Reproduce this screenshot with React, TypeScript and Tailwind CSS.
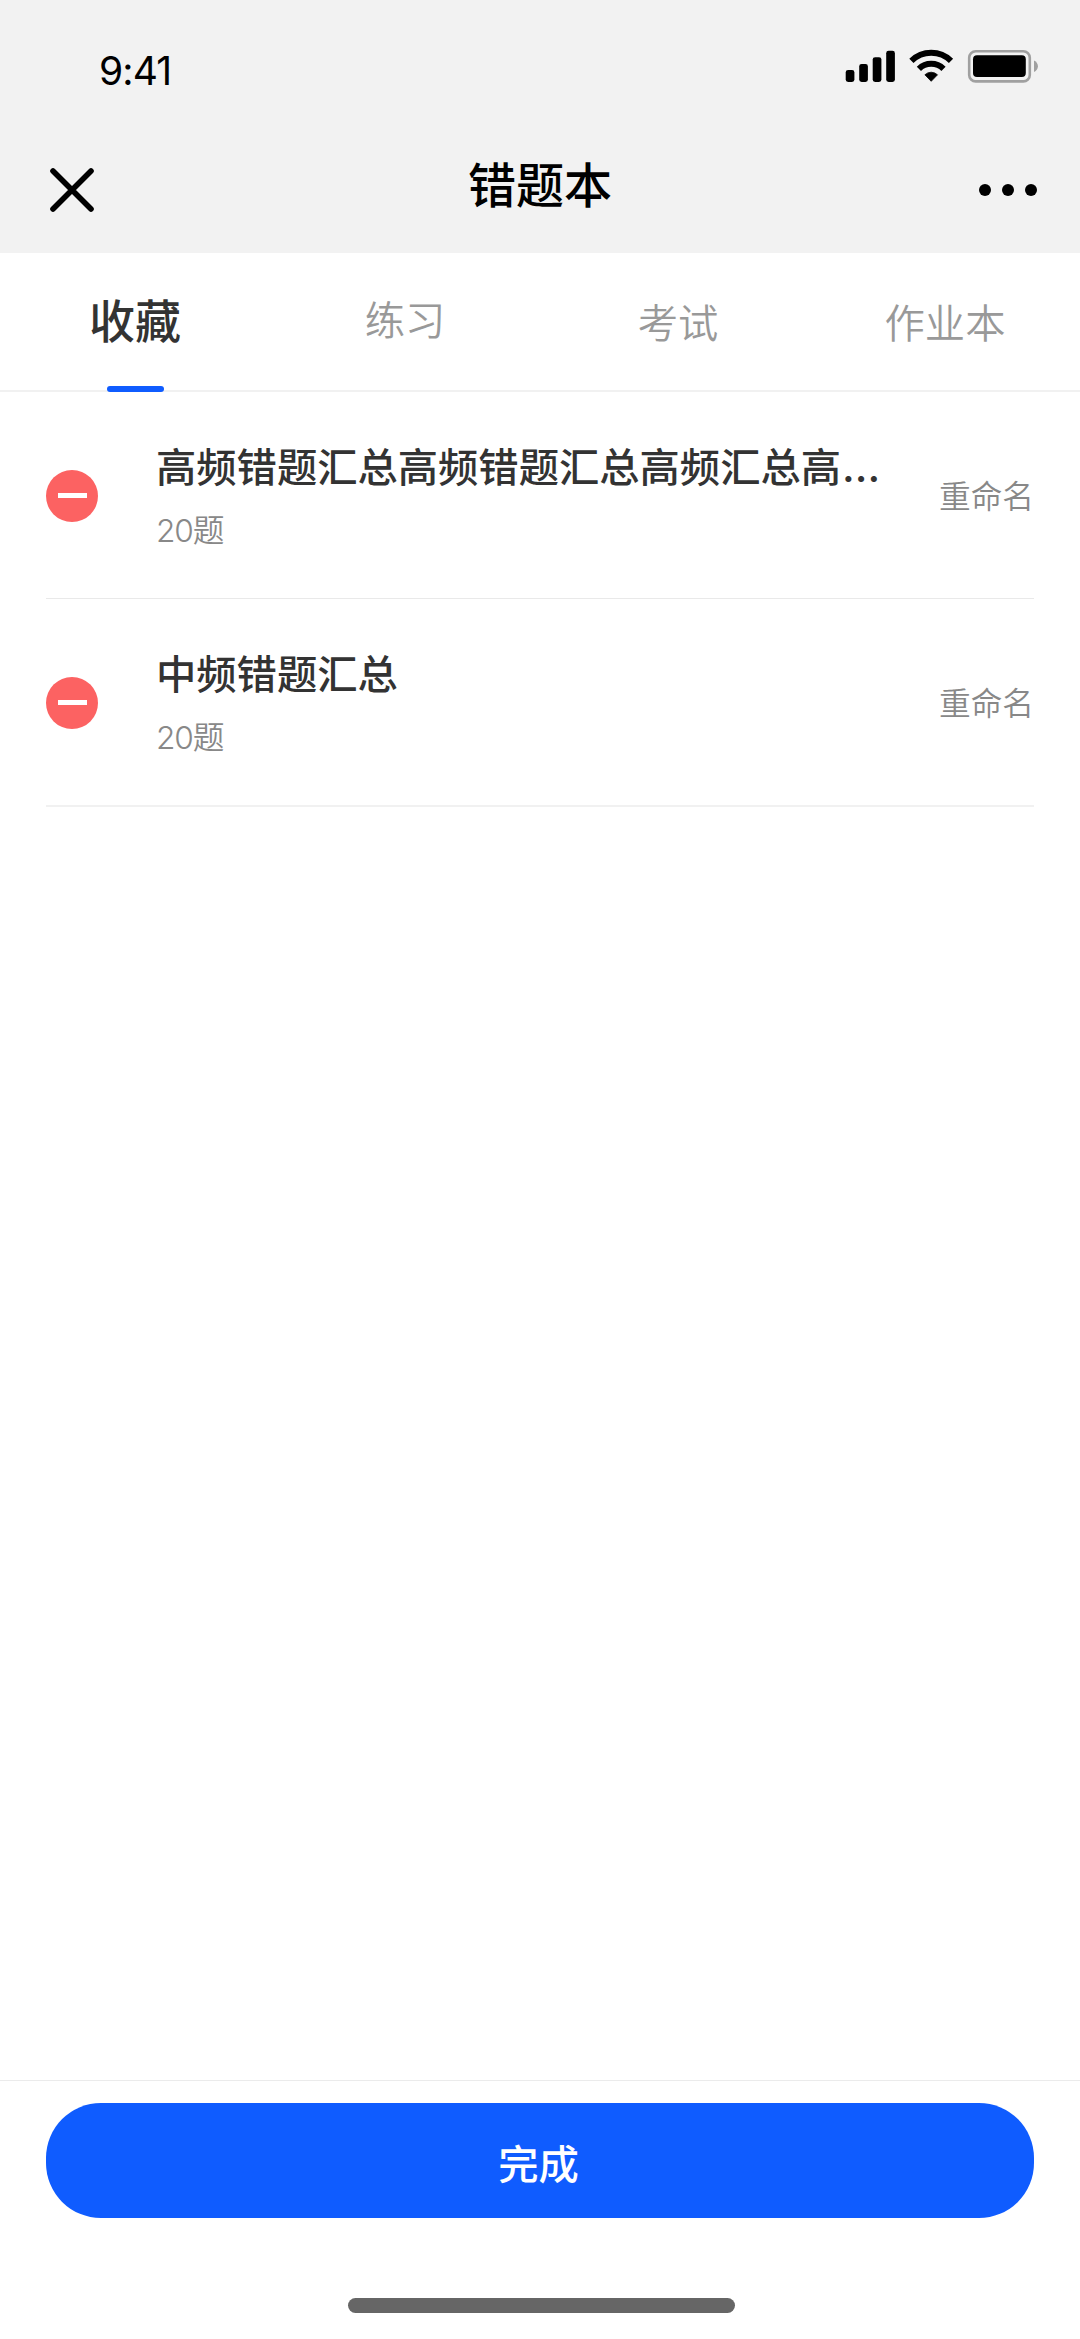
type Item = { name: string; count: number };

const tabs = [
  { label: "收藏", style: "text-[46px] font-medium text-[#333333] pt-[32px]", active: true },
  { label: "练习", style: "text-[40.3px] font-[350] text-[#999999] pt-[32px]", active: false },
  { label: "考试", style: "text-[40.3px] font-[350] text-[#999999] pt-[35px] pl-[6px]", active: false },
  { label: "作业本", style: "text-[40.3px] font-[350] text-[#999999] pt-[35px]", active: false },
];

const items: Item[] = [
  { name: "高频错题汇总高频错题汇总高频汇总高", count: 20 },
  { name: "中频错题汇总", count: 20 },
];

function StatusIcons() {
  return (
    <svg width="194" height="34" viewBox="845 49 194 34" fill="none">
      <g fill="#000">
        <rect x="845.7" y="70" width="8.7" height="12" rx="2.4" />
        <rect x="859.2" y="64" width="8.7" height="18" rx="2.4" />
        <rect x="872.7" y="57.2" width="8.7" height="24.8" rx="2.4" />
        <rect x="886.2" y="50.8" width="8.7" height="31.2" rx="2.4" />
      </g>
      <g stroke="#000" strokeWidth="6">
        <path d="M911.4 60.8a28.3 28.3 0 0 1 39.6 0" />
        <path d="M918.9 68.8a17.6 17.6 0 0 1 24.6 0" />
      </g>
      <path d="M924.9 74.8a9 9 0 0 1 12.6 0L931.2 81.3Z" fill="#000" stroke="#000" strokeWidth="0.8" strokeLinejoin="round" />
      <rect x="969.2" y="51.2" width="60.6" height="30.2" rx="6.5" stroke="#a0a0a0" strokeWidth="2.6" />
      <rect x="973" y="55.2" width="52.8" height="21.8" rx="4" fill="#000" />
      <path d="M1034 60.5c5.2 2.3 5.2 9.3 0 11.6Z" fill="#a0a0a0" />
    </svg>
  );
}

function Row({ item, truncated }: { item: Item; truncated: boolean }) {
  return (
    <li className="mx-[46px] border-b border-[#e9e9e9] last:border-b-2 last:border-[#f1f1f1]">
      <div className="flex h-[206px] items-center">
        <button className="mt-px flex size-[52px] shrink-0 items-center justify-center rounded-full bg-[#fc6262]">
          <span className="h-[5px] w-[29px] bg-white" />
        </button>
        <div className="-mt-[2px] ml-[58px] flex-1">
          <p className="text-[40.3px] leading-[58px] font-medium whitespace-nowrap text-[#333333]">
            {item.name}
            {truncated && <span className="ml-px font-['Inter'] text-[42px] leading-none">…</span>}
          </p>
          <p className="mt-[12px] text-[31.7px] leading-[44px] font-[350] text-[#888888]">
            <span className="font-['Inter'] font-light tracking-[-0.035em]">{item.count}</span>题
          </p>
        </div>
        <button className="-mt-[2px] text-[31.7px] leading-[44px] font-[350] whitespace-nowrap text-[#888888]">
          重命名
        </button>
      </div>
    </li>
  );
}

export default function App() {
  return (
    <div className="flex h-[2339px] w-[1080px] flex-col overflow-hidden bg-white font-['Noto_Sans_CJK_SC',sans-serif]">
      <header className="h-[253px] shrink-0 bg-[#f2f2f2]">
        <div className="flex h-[83px] items-start justify-between pt-[49px] pr-[41px] pl-[99px]">
          <span className="mt-[2px] font-['Inter'] text-[39px] leading-[40px] tracking-[-0.022em] text-black">9:41</span>
          <StatusIcons />
        </div>
        <div className="mt-[66px] grid grid-cols-3 items-start pr-[43px] pl-[50px]">
          <svg className="mt-[19px]" width="44" height="44" viewBox="0 0 44 44" stroke="#000" strokeWidth="5.6" strokeLinecap="round">
            <path d="M3 3 41 41M41 3 3 41" />
          </svg>
          <h1 className="-ml-[7px] text-center text-[48px] leading-[66px] font-medium text-black">错题本</h1>
          <svg className="mt-[35px] justify-self-end" width="58" height="12" viewBox="0 0 58 12">
            <circle cx="6" cy="6" r="6" />
            <circle cx="29" cy="6" r="6" />
            <circle cx="52" cy="6" r="6" />
          </svg>
        </div>
      </header>
      <nav className="grid h-[139px] shrink-0 grid-cols-4 border-b-2 border-[#f1f1f1]">
        {tabs.map((tab) => (
          <button key={tab.label} className="relative flex h-[139px] items-start justify-center">
            <span className={`leading-[66px] whitespace-nowrap ${tab.style}`}>{tab.label}</span>
            {tab.active && (
              <span className="absolute bottom-0 left-[107px] h-[6px] w-[57px] rounded-full bg-[#0f5cff]" />
            )}
          </button>
        ))}
      </nav>
      <ul className="flex-1">
        {items.map((item, i) => (
          <Row key={item.name} item={item} truncated={i === 0} />
        ))}
      </ul>
      <footer className="flex h-[259px] shrink-0 flex-col items-center border-t border-[#ebebeb] px-[46px] pt-[22px]">
        <button className="h-[115px] w-full rounded-[55px] bg-[#0f5cff] pt-[2px] pr-[3px] text-[40.3px] leading-[58px] font-medium text-white">
          完成
        </button>
        <div className="mt-[80px] ml-[2px] h-[15px] w-[387px] rounded-full bg-[#666666]" />
      </footer>
    </div>
  );
}
